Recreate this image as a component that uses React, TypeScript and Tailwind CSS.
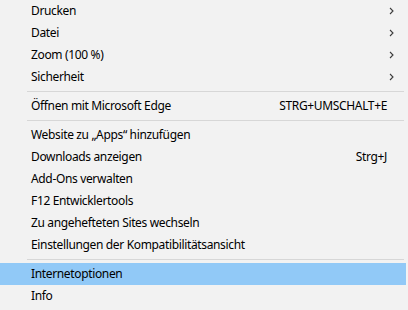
import React from 'react';

type Item = { label: string; shortcut?: string; submenu?: boolean; active?: boolean };

const groups: Item[][] = [
  [
    { label: 'Drucken', submenu: true },
    { label: 'Datei', submenu: true },
    { label: 'Zoom (100 %)', submenu: true },
    { label: 'Sicherheit', submenu: true },
  ],
  [{ label: 'Öffnen mit Microsoft Edge', shortcut: 'STRG+UMSCHALT+E' }],
  [
    { label: 'Website zu „Apps“ hinzufügen' },
    { label: 'Downloads anzeigen', shortcut: 'Strg+J' },
    { label: 'Add-Ons verwalten' },
    { label: 'F12 Entwicklertools' },
    { label: 'Zu angehefteten Sites wechseln' },
    { label: 'Einstellungen der Kompatibilitätsansicht' },
  ],
  [{ label: 'Internetoptionen', active: true }, { label: 'Info' }],
];

const Chevron = () => (
  <svg width="5" height="8" viewBox="0 0 5 8" className="mr-[12px]">
    <polyline points="1,1 4,4 1,7" fill="none" stroke="#3c3c3c" strokeWidth="1.1" />
  </svg>
);

const Row = ({ item }: { item: Item }) => (
  <div
    className={`flex h-[22px] items-center justify-between pl-[31px] mr-[2px] ${
      item.active ? 'bg-[#91c9f7]' : ''
    }`}
  >
    <span>{item.label}</span>
    {item.submenu && <Chevron />}
    {item.shortcut && <span className="mr-[19px]">{item.shortcut}</span>}
  </div>
);

export default function App() {
  return (
    <div
      className="w-[408px] h-[310px] overflow-hidden bg-[#f2f2f2] text-[12px] tracking-[-0.35px] text-black"
      style={{ fontFamily: '"Segoe UI", "Noto Sans", sans-serif' }}
    >
      {groups.map((g, i) => (
        <div key={i}>
          {i > 0 && <div className="my-[3px] ml-[27px] mr-[4px] h-px bg-[#d7d7d7]" />}
          {g.map((item) => (
            <Row key={item.label} item={item} />
          ))}
        </div>
      ))}
    </div>
  );
}
